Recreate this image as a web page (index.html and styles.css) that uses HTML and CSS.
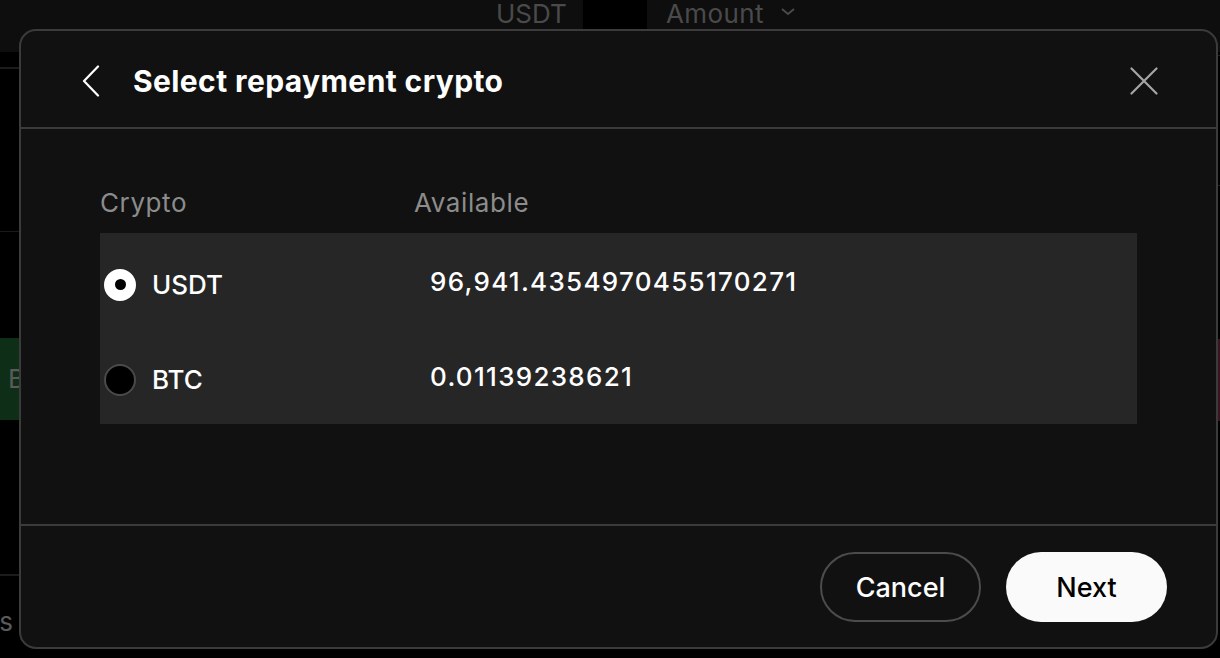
FILE: index.html
```html
<!DOCTYPE html>
<html lang="en">
<head>
<meta charset="utf-8">
<title>Select repayment crypto</title>
<link rel="stylesheet" href="styles.css">
</head>
<body>
<div class="page">
  <header class="topbar">
    <span class="tb-cur">USDT</span>
    <span class="tb-box"></span>
    <span class="tb-amount">Amount
      <svg class="tb-chev" width="16" height="10" viewBox="0 0 16 10"><path d="M2 2 L8 7 L14 2" fill="none" stroke="#4a4a4a" stroke-width="2"/></svg>
    </span>
  </header>
  <main class="main">
    <aside class="side-left">
      <div class="sl-gap"></div>
      <div class="sl-block"></div>
      <div class="sl-area">
        <div class="sl-buy">Buy</div>
      </div>
      <div class="sl-foot"><span class="sl-word">Positions</span></div>
    </aside>
    <div class="center"></div>
    <aside class="side-right">
      <div class="sr-a"></div>
      <div class="sr-b"></div>
      <div class="sr-sell"></div>
    </aside>
  </main>
</div>

<div class="modal" role="dialog" aria-labelledby="modal-title">
  <div class="modal-head">
    <button class="icon-btn back" aria-label="Back">
      <svg width="18" height="32" viewBox="0 0 18 32"><path d="M16 1.5 L2 16 L16 30.5" fill="none" stroke="#ffffff" stroke-width="2.2" stroke-linecap="round" stroke-linejoin="round"/></svg>
    </button>
    <h2 id="modal-title" class="modal-title">Select repayment crypto</h2>
    <button class="icon-btn close" aria-label="Close">
      <svg width="28" height="28" viewBox="0 0 28 28"><path d="M1.5 1.5 L26.5 26.5 M26.5 1.5 L1.5 26.5" fill="none" stroke="#a6a6a6" stroke-width="2.2" stroke-linecap="round"/></svg>
    </button>
  </div>

  <div class="modal-body">
    <div class="table-head">
      <span class="col-crypto">Crypto</span>
      <span class="col-avail">Available</span>
    </div>
    <div class="table">
      <label class="row">
        <span class="radio checked"><span class="dot"></span></span>
        <span class="coin">USDT</span>
        <span class="amount">96,941.4354970455170271</span>
      </label>
      <label class="row">
        <span class="radio"></span>
        <span class="coin">BTC</span>
        <span class="amount">0.01139238621</span>
      </label>
    </div>
  </div>

  <div class="modal-foot">
    <button class="btn btn-outline">Cancel</button>
    <button class="btn btn-solid">Next</button>
  </div>
</div>
</body>
</html>
```

FILE: styles.css
```css
* { box-sizing: border-box; }

html, body {
  margin: 0;
  padding: 0;
  width: 1220px;
  height: 658px;
  overflow: hidden;
  background: #000;
  font-family: Inter, "Noto Sans", "Liberation Sans", sans-serif;
  color: #fff;
}

/* ---------- underlying page ---------- */
.page {
  width: 1220px;
  height: 658px;
  display: flex;
  flex-direction: column;
}

.topbar {
  height: 52px;
  background: #0e0e0e;
  display: flex;
  align-items: flex-start;
  padding-left: 496px;
  flex: none;
}

.tb-cur {
  font-size: 26px;
  line-height: 28px;
  color: #4a4a4a;
  width: 87px;
}

.tb-box {
  width: 64px;
  height: 36px;
  background: #000;
}

.tb-amount {
  margin-left: 19px;
  font-size: 26px;
  line-height: 28px;
  letter-spacing: 0.4px;
  color: #4a4a4a;
  display: flex;
  align-items: center;
  gap: 16px;
}

.tb-chev { margin-top: -4px; }

.main {
  flex: 1;
  display: flex;
}

.side-left {
  width: 19px;
  overflow: hidden;
  display: flex;
  flex-direction: column;
}

.sl-gap {
  height: 17px;
  background: #000;
  border-bottom: 2px solid #1c1c1c;
}

.sl-block {
  height: 163px;
  border-bottom: 1px solid #1a1a1a;
}

.sl-area {
  height: 344px;
  padding-top: 106px;
  border-bottom: 2px solid #1c1c1c;
}

.sl-buy {
  height: 82px;
  background: #0f2e18;
  color: #5a5a5a;
  font-size: 26px;
  line-height: 82px;
  padding-left: 8px;
  white-space: nowrap;
}

.sl-foot {
  display: flex;
  justify-content: flex-end;
  width: 13px;
  padding-top: 30px;
}

.sl-word {
  flex: none;
  font-size: 26px;
  color: #5a5a5a;
  white-space: nowrap;
}

.center { flex: 1; }

.side-right {
  width: 2px;
  display: flex;
  flex-direction: column;
}

.sr-a { height: 4px; border-bottom: 1px solid #222; }
.sr-b { height: 130px; border-bottom: 1px solid #222; }
.sr-sell { margin-top: 153px; height: 82px; background: #3a1420; }

/* ---------- modal ---------- */
.modal {
  position: absolute;
  left: 19px;
  top: 29px;
  width: 1199px;
  height: 620px;
  background: #111111;
  border: 2px solid #3b3b3b;
  border-radius: 17px;
  display: flex;
  flex-direction: column;
}

.modal-head {
  height: 98px;
  flex: none;
  display: flex;
  align-items: center;
  padding: 4px 58px 0 61px;
  border-bottom: 2px solid #3b3b3b;
}

.icon-btn {
  background: none;
  border: 0;
  padding: 0;
  display: flex;
  cursor: pointer;
}

.back { margin-right: 33px; }

.modal-title {
  margin: 0;
  flex: 1;
  font-size: 30px;
  font-weight: 700;
  letter-spacing: 0.4px;
  color: #fff;
}

.modal-body {
  flex: 1;
  padding: 56px 79px 0;
  border-bottom: 2px solid #3b3b3b;
}

.table-head {
  height: 34px;
  display: flex;
  align-items: center;
  margin-bottom: 14px;
  font-size: 26px;
  letter-spacing: 0.6px;
  color: #8c8c8c;
}

.col-crypto { width: 314px; }

.table {
  background: #262626;
  padding: 4px 0 0 4px;
  height: 191px;
}

.row {
  height: 95px;
  display: flex;
  align-items: center;
}

.radio {
  width: 32px;
  height: 32px;
  border-radius: 50%;
  background: #000;
  border: 2px solid #4a4a4a;
  display: flex;
  align-items: center;
  justify-content: center;
  flex: none;
}

.radio.checked {
  background: #fff;
  border-color: #fff;
}

.dot {
  width: 11px;
  height: 11px;
  border-radius: 50%;
  background: #000;
}

.coin {
  margin-left: 16px;
  width: 278px;
  font-size: 26px;
  font-weight: 500;
  color: #fff;
}

.amount {
  margin-bottom: 6px;
  font-size: 26px;
  font-weight: 500;
  letter-spacing: 1.3px;
  color: #fff;
}

.modal-foot {
  height: 121px;
  flex: none;
  display: flex;
  justify-content: flex-end;
  align-items: flex-start;
  padding: 26px 49px 0 0;
  gap: 25px;
}

.btn {
  height: 70px;
  border-radius: 35px;
  font-family: inherit;
  font-size: 27px;
  font-weight: 500;
  cursor: pointer;
}

.btn-outline {
  width: 161px;
  background: transparent;
  color: #fff;
  border: 2px solid #4c4c4c;
}

.btn-solid {
  width: 161px;
  background: #fafafa;
  color: #000;
  border: 0;
}
```
